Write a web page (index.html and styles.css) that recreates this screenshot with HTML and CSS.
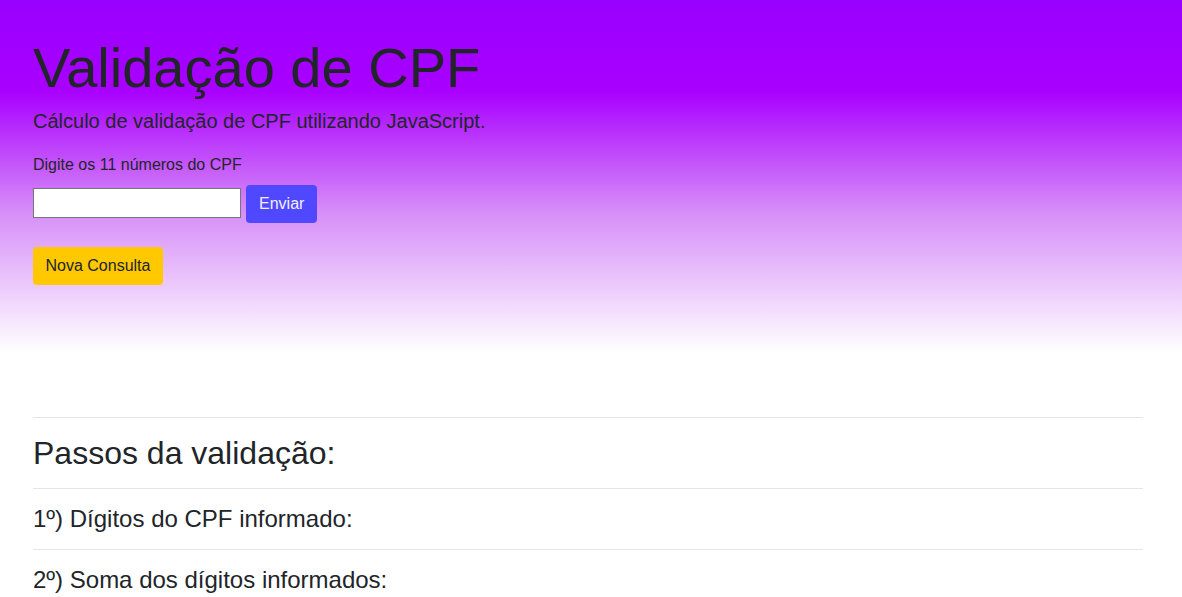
FILE: index.html
```html
<!DOCTYPE html>
<html lang="pt-BR">
<head>
<meta charset="utf-8">
<title>Validação de CPF</title>
<link rel="stylesheet" href="styles.css">
</head>
<body>
<header class="hero">
  <h1 class="title">Validação de CPF</h1>
  <p class="lead">Cálculo de validação de CPF utilizando JavaScript.</p>
  <label class="label" for="cpf">Digite os 11 números do CPF</label>
  <div class="form-row">
    <input class="cpf-input" id="cpf" type="text">
    <button class="btn btn-send" type="button">Enviar</button>
  </div>
  <button class="btn btn-new" type="button">Nova Consulta</button>
</header>
<main class="steps">
  <hr class="rule">
  <h2 class="steps-title">Passos da validação:</h2>
  <hr class="rule">
  <h4 class="step">1º) Dígitos do CPF informado:</h4>
  <hr class="rule">
  <h4 class="step">2º) Soma dos dígitos informados:</h4>
</main>
</body>
</html>
```
FILE: styles.css
```css
* { box-sizing: border-box; }
html, body { margin: 0; padding: 0; }
body {
  font-family: "Liberation Sans", Arial, sans-serif;
  color: #212529;
  font-size: 16px;
  line-height: 1.5;
  background: #fff;
}
.hero {
  height: 352px;
  padding: 34px 39px 0 33px;
  background: linear-gradient(to bottom, #9900ff 0%, #a900ff 26%, #d68df8 60%, #ffffff 100%);
  display: flex;
  flex-direction: column;
  align-items: flex-start;
}
.title {
  margin: 0 0 5px;
  font-size: 56px;
  line-height: 1.2;
  font-weight: 300;
}
.lead {
  margin: 0 0 17px;
  font-size: 20px;
  line-height: 1.5;
  font-weight: 300;
}
.label {
  display: block;
  margin-bottom: 8px;
  font-size: 16px;
  line-height: 24px;
}
.form-row {
  display: flex;
  align-items: flex-start;
  gap: 5px;
}
.cpf-input {
  margin-top: 3px;
  width: 208px;
  height: 30px;
  border: 1px solid #767676;
  background: #fff;
  border-radius: 0;
  padding: 2px 4px;
  font-family: inherit;
  font-size: 13px;
}
.btn {
  font-family: inherit;
  font-size: 16px;
  line-height: 24px;
  padding: 6px 12px;
  border: 1px solid transparent;
  border-radius: 4px;
  cursor: pointer;
}
.btn-send {
  background: #5048ff;
  color: #f2f0ff;
}
.btn-new {
  margin-top: 24px;
  padding: 6px 11.5px;
  background: #ffc800;
  color: #212529;
}
.steps {
  padding: 65px 39px 0 33px;
}
.rule {
  margin: 0;
  border: 0;
  border-top: 1px solid rgba(0, 0, 0, 0.1);
}
.steps-title {
  margin: 0;
  padding: 16px 0 16px;
  font-size: 32px;
  line-height: 1.2;
  font-weight: 500;
}
.step {
  margin: 0;
  padding: 16px 0 15px;
  font-size: 24px;
  line-height: 1.2;
  font-weight: 500;
}
```
